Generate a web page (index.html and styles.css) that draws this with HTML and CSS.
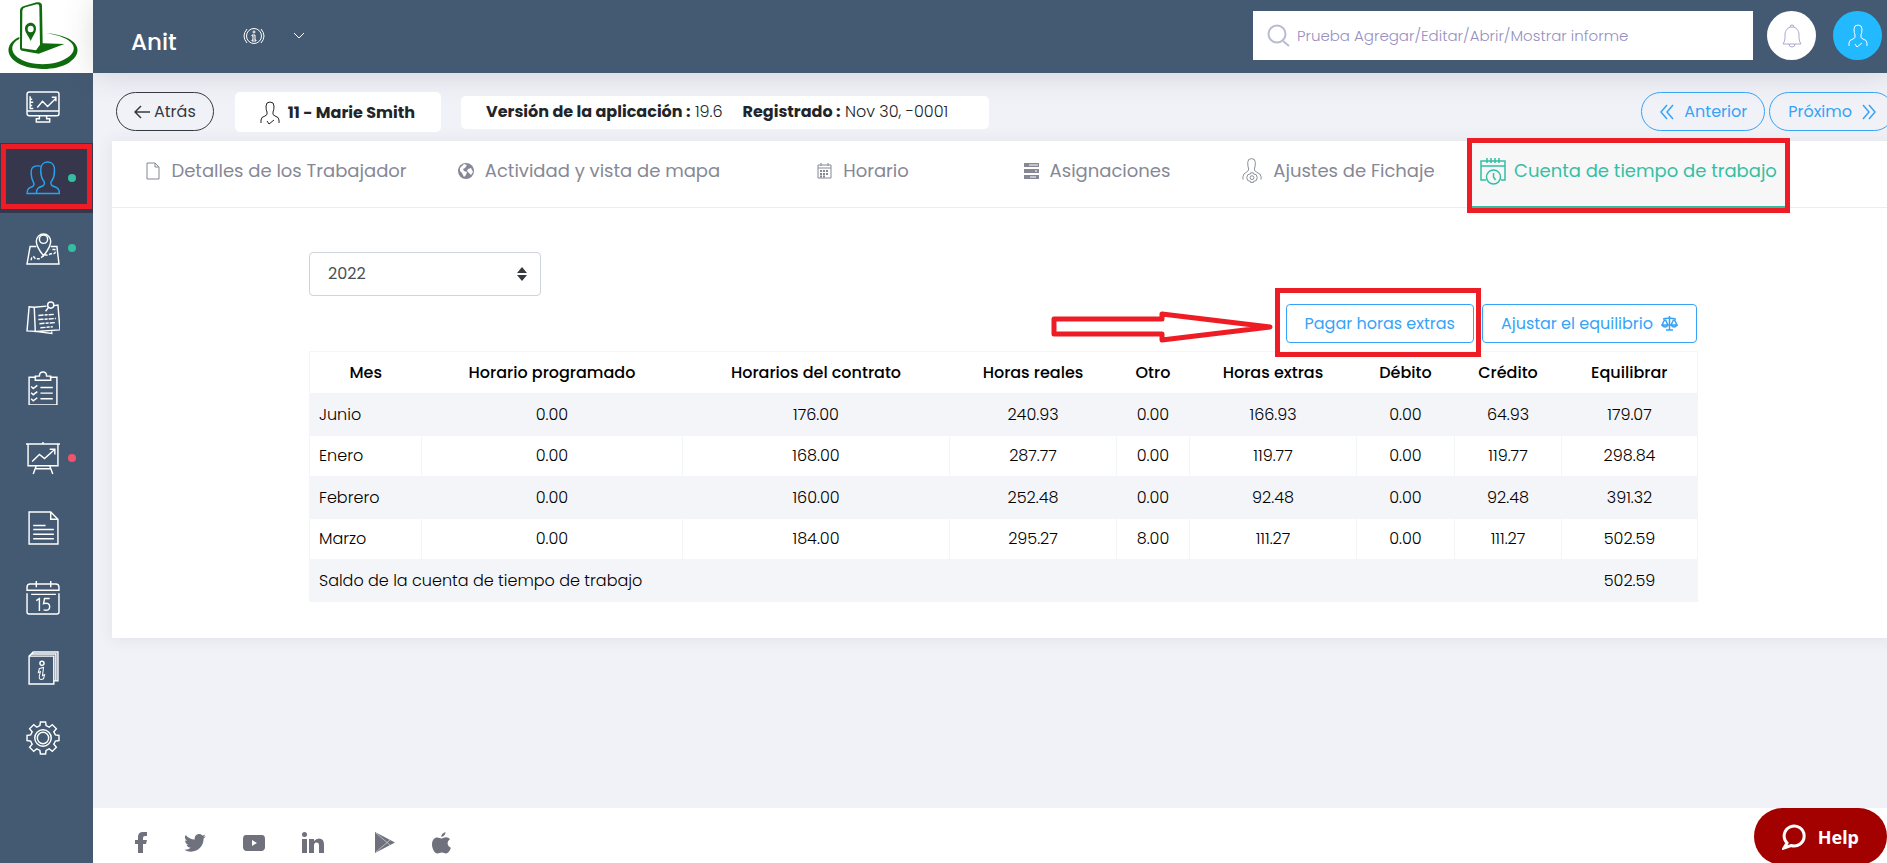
FILE: index.html
```html
<!DOCTYPE html>
<html lang="es">
<head>
    <meta charset="utf-8">
    <title>Anit</title>
    <link rel="stylesheet" href="styles.css">
</head>
<body>
<div class="app">
    <aside class="sidebar">
        <a class="logo" href="#" aria-label="Anit">
            <svg viewBox="0 0 279 219">
                <path fill="#0e6b0e" fill-rule="evenodd" d="M60 32Q60 22 72 18L110 7Q126 5 126 18L128 130L193 132L116 161Q90 157 66 152Q59 151 60 142ZM67 32Q67 25 76 22L110 13Q118 11 118 20L120 134L108 151L66 145Z"/>
                <path fill="#0e6b0e" fill-rule="evenodd" d="M92 68C101 68 108 75 108 86C108 98 98 108 92 123C86 108 75 98 75 86C75 75 83 68 92 68ZM92 77A9 10 0 1 0 92 97A9 10 0 1 0 92 77Z"/>
                <path fill="#0e6b0e" d="M58 111C20 128 15 160 45 184C80 212 165 215 207 188C255 156 238 108 138 99C222 112 240 146 204 172C166 200 88 199 52 172C28 152 34 128 58 117Z"/>
            </svg>
        </a>
        <nav class="menu">
            <a class="menu-item" href="#" aria-label="Panel">
                <svg viewBox="0 0 33 33"><rect x="1" y="1" width="31" height="23" rx="2"/><path d="M1 19.500h31M13 24v3h-3v3h13v-3h-3v-3M4 5v12h3M4 8h2M4 11h3M4 14h2M11 16l5-6 5 5 8-8M25 6h4v4"/></svg>
            </a>
            <a class="menu-item active" href="#" aria-label="Trabajadores">
                <svg viewBox="0 0 33 33"><path d="M10 31.500h22.500c0-5-3-6-6-7-3-1-3-4-1-6 2-3 2.500-6 2-12C27 3 24 1 21 1s-6 2-6.500 5.500c-.5 6 0 9 2 12 2 2 2 5-1 6-3 1-5.500 2-5.500 7zM14 5c-6-1-9 1-9 5 0 5 0 7 2 10 1 2 1 4-1 5-3 1-5 2-5 6.500h9"/></svg>
                <i class="dot green"></i>
                <span class="mark mark-menu"></span>
            </a>
            <a class="menu-item" href="#" aria-label="Mapa">
                <svg viewBox="0 0 33 33"><path d="M10 15H4L1 32h31l-2-17h-6M17 24c-5-6-7-10-7-14a7 7 0 0 1 14 0c0 4-2 8-7 14z"/><circle cx="17" cy="8" r="4"/><path stroke-dasharray="3 1.500" d="M17 24l-4 3H9c-2-4-4-2-4 2M18 23c4 1 4 0 6-1 5 1 5-2 4-4h-4"/></svg>
                <i class="dot green"></i>
            </a>
            <a class="menu-item" href="#" aria-label="Notas">
                <svg viewBox="0 0 33 33"><path d="M8 6l-5-.5L1 29l8 .5 16 2v-2M8 6l1 23.500L33 28 31 4l-4 .5M8 6l12-1"/><circle cx="24" cy="4" r="3"/><path d="M22 6l-3 4"/><path stroke-dasharray="5 1 3 1" d="M12 14l15-1M12 18l17-1M13 22l15-1M14 26l12-1"/></svg>
            </a>
            <a class="menu-item" href="#" aria-label="Tareas">
                <svg viewBox="0 0 33 33"><path d="M10 6H3v27h27V6h-7M9 9V5h4c0-2 1-4 3.500-4S20 3 20 5h4v4zM14 16h12M14 21.500h12M14 27h12M5 15l2 2 4-3M5 21l2 2 4-3M5 27l2 2 4-3"/></svg>
            </a>
            <a class="menu-item" href="#" aria-label="Informes">
                <svg viewBox="0 0 33 33"><path d="M0 3h33M2 3v21h29V3M16.500 1v2M10 24L7 32M23 24l3 8M9 27h15M6 20l7-7 5 4 10-9M23 8h5v5"/></svg>
                <i class="dot red"></i>
            </a>
            <a class="menu-item" href="#" aria-label="Documentos">
                <svg viewBox="0 0 33 33"><path d="M3 1h21l7 7v24H3zM24 1v7h7M7 14h12M7 18h20M7 22.500h20M7 27h20"/></svg>
            </a>
            <a class="menu-item" href="#" aria-label="Calendario">
                <svg viewBox="0 0 33 33"><path d="M1 9V6q0-3 3-3h25q3 0 3 3v3zM1 12v18q0 2 2 2h27q2 0 2-2V12M10 0v6M24 0v6M5 13h24"/><path d="M10 19l3-2v12M23 17h-5l-1 5c4-1 6 0 6 3s-2 4-6 3"/></svg>
            </a>
            <a class="menu-item" href="#" aria-label="Ayuda">
                <svg viewBox="0 0 33 33"><path d="M3 5h24v27H3zM3 5l4-4h24v28h-4M5 3h24v26"/><circle cx="15.500" cy="12" r="2"/><path stroke-width="1" d="M13 17l4-1-1 8 2-1-1 4q-5 2-4-3l1-4-2 1z"/></svg>
            </a>
            <a class="menu-item" href="#" aria-label="Ajustes">
                <svg viewBox="0 0 33 33"><path d="M13.500 4.500l.5-3.500h5l.5 3.500 3 1.500 3-2.500 4 4-2.500 3 1.500 3 3.500.5v5l-3.500.5-1.500 3 2.500 3-4 4-3-2.500-3 1.500-.5 3.500h-5l-.5-3.500-3-1.500-3 2.500-4-4 2.500-3-1.500-3L1 19v-5l3.500-.5 1.500-3L3.500 7.500l4-4 3 2.500z"/><circle cx="16.500" cy="16.500" r="8"/><circle cx="16.500" cy="16.500" r="5.500"/></svg>
            </a>
        </nav>
    </aside>

    <div class="page">
        <header class="header">
            <h1 class="brand">Anit</h1>
            <button class="info-menu" type="button" aria-label="Información">
                <svg width="22" height="18" viewBox="0 0 22 18"><circle cx="11" cy="9" r="7.500"/><circle cx="11" cy="5" r="1"/><path d="M9 8h3v5h1v1H9v-1h1V9H9zM4 2q-6 7 0 14M18 2q6 7 0 14"/></svg>
                <svg width="12" height="8" viewBox="0 0 12 8"><path d="M1 1l5 5 5-5"/></svg>
            </button>
            <div class="header-right">
                <div class="search">
                    <svg width="24" height="24" viewBox="0 0 24 24"><circle cx="10" cy="10" r="8.500"/><path d="M16 17l6 5"/></svg>
                    <input type="text" aria-label="Buscar" placeholder="Prueba Agregar/Editar/Abrir/Mostrar informe">
                </div>
                <button class="round" type="button" aria-label="Notificaciones">
                    <svg width="24" height="24" viewBox="0 0 24 24"><path d="M3 20c2-3 2-5 2-9 0-5 3-8 7-8s7 3 7 8c0 4 0 6 2 9zM10 3q0-2 2-2t2 2M9 20q0 3 3 3t3-3"/></svg>
                </button>
                <button class="round user" type="button" aria-label="Usuario">
                    <svg width="20" height="24" viewBox="0 0 20 24"><path d="M1 22v-3q0-3 4-4 3-1 2-4-1-2-1-6 0-4 4-4t4 4q0 4-1 6-1 3 2 4 4 1 4 4v3M7 20l2 3 5-4"/></svg>
                </button>
            </div>
        </header>

        <main class="content">
            <div class="toolbar">
                <button class="pill back" type="button">
                    <svg width="17" height="14" viewBox="0 0 17 14"><path d="M7 1L1 7l6 6M1 7h15"/></svg>Atrás
                </button>
                <div class="worker">
                    <svg width="20" height="24" viewBox="0 0 20 24"><path d="M1 22v-3q0-3 4-4 3-1 2-4-1-2-1-6 0-4 4-4t4 4q0 4-1 6-1 3 2 4 4 1 4 4v3M7 20l2 3 5-4"/></svg>
                    <b>11 - Marie Smith</b>
                </div>
                <div class="version">
                    <span><b>Versión de la aplicación :</b> 19.6</span>
                    <span><b>Registrado :</b> Nov 30, -0001</span>
                </div>
                <div class="pager">
                    <button class="pill" type="button">
                        <svg width="14" height="16" viewBox="0 0 14 16"><path d="M7 1L1 8l6 7M13 1L7 8l6 7"/></svg>Anterior
                    </button>
                    <button class="pill" type="button">
                        Próximo<svg width="14" height="16" viewBox="0 0 14 16"><path d="M1 1l6 7-6 7M7 1l6 7-6 7"/></svg>
                    </button>
                </div>
            </div>

            <section class="panel">
                <nav class="tabs">
                    <a class="tab" href="#">
                        <svg width="14" height="18" viewBox="0 0 14 18"><path d="M1 1h8l4 4v12H1zM9 1v4h4"/></svg>Detalles de los Trabajador
                    </a>
                    <a class="tab" href="#">
                        <svg width="16" height="16" viewBox="0 0 16 16"><circle class="solid" cx="8" cy="8" r="8"/><path class="cut" d="M2 5l4-4 3 1-2 3-2 1 1 2 3 1-1 3-2 2-2-4-2-2zM10 6l3-1 2 4-2 3-2-2-2-2z"/></svg>Actividad y vista de mapa
                    </a>
                    <a class="tab" href="#">
                        <svg width="15" height="16" viewBox="0 0 15 16"><path d="M1 2h13v13H1zM1 5h13M4 0v3M11 0v3"/><path stroke-width="2" stroke-dasharray="2 1" d="M3 8h9M3 11h9M3 13.500h6"/></svg>Horario
                    </a>
                    <a class="tab" href="#">
                        <svg width="15" height="16" viewBox="0 0 15 16"><path class="solid" d="M0 0h15v4H0zM0 6h15v4H0zM0 12h15v4H0z"/><path class="cutline" d="M5 2h9M11 8h2M6 14h6"/></svg>Asignaciones
                    </a>
                    <a class="tab" href="#">
                        <svg width="20" height="27" viewBox="0 0 21 27"><path d="M1 23v-3q0-3 4-5 2-1 2-3-1-3-1-7 0-4 4-4t4 4q0 4-1 7 0 2 2 3 5 2 5 5v3"/><circle cx="10.500" cy="21" r="2"/><path d="M9 16h3v1l3 1 1 3-1 3-3 1v1H9v-1l-3-1-1-3 1-3 3-1z"/></svg>Ajustes de Fichaje
                    </a>
                    <a class="tab active" href="#">
                        <svg width="26" height="27" viewBox="0 0 26 27"><path d="M6 22H1V3h24v19h-4M1 8h24M7 0v5M11 0v5M15 0v5M19 0v5"/><circle cx="13.500" cy="19" r="7"/><path d="M13.500 15v4l2 3"/></svg>Cuenta de tiempo de trabajo
                        <span class="mark mark-tab"></span>
                    </a>
                </nav>

                <div class="account">
                    <select class="year" aria-label="Año">
                        <option>2022</option>
                    </select>

                    <div class="actions">
                        <div class="pay">
                            <button class="btn" type="button">Pagar horas extras</button>
                            <span class="mark mark-pay"></span>
                            <svg class="arrow" width="223" height="32" viewBox="0 0 223 32"><path d="M3 8h108V3l108 13-108 13v-6H3z"/></svg>
                        </div>
                        <button class="btn" type="button">
                            Ajustar el equilibrio
                            <svg width="17" height="15" viewBox="0 0 17 15"><path d="M8.500 0v14M5 14h7M2 3l6-1 7 1M4 3L1 9h6zM13 3l-3 6h6zM1 9q3 4 6 0M10 9q3 4 6 0"/></svg>
                        </button>
                    </div>

                    <table class="hours">
                        <colgroup>
                            <col class="c-month"><col class="c-planned"><col class="c-contract"><col class="c-real"><col class="c-other"><col class="c-extra"><col class="c-debit"><col class="c-credit"><col class="c-balance">
                        </colgroup>
                        <thead>
                            <tr><th>Mes</th><th>Horario programado</th><th>Horarios del contrato</th><th>Horas reales</th><th>Otro</th><th>Horas extras</th><th>Débito</th><th>Crédito</th><th>Equilibrar</th></tr>
                        </thead>
                        <tbody>
                            <tr><td>Junio</td><td>0.00</td><td>176.00</td><td>240.93</td><td>0.00</td><td>166.93</td><td>0.00</td><td>64.93</td><td>179.07</td></tr>
                            <tr><td>Enero</td><td>0.00</td><td>168.00</td><td>287.77</td><td>0.00</td><td>119.77</td><td>0.00</td><td>119.77</td><td>298.84</td></tr>
                            <tr><td>Febrero</td><td>0.00</td><td>160.00</td><td>252.48</td><td>0.00</td><td>92.48</td><td>0.00</td><td>92.48</td><td>391.32</td></tr>
                            <tr><td>Marzo</td><td>0.00</td><td>184.00</td><td>295.27</td><td>8.00</td><td>111.27</td><td>0.00</td><td>111.27</td><td>502.59</td></tr>
                            <tr><td colspan="8">Saldo de la cuenta de tiempo de trabajo</td><td>502.59</td></tr>
                        </tbody>
                    </table>
                </div>
            </section>
        </main>

        <footer class="footer">
            <a href="#" aria-label="Facebook"><svg width="12" height="21" viewBox="0 0 12 21"><path d="M12 0v4h-2q-2 0-2 2v2h4l-1 4H8v9H3v-9H0V8h3V5q0-5 5-5z"/></svg></a>
            <a href="#" aria-label="Twitter"><svg width="22" height="18" viewBox="0 0 24 20"><path d="M24 2.400a10 10 0 0 1-2.800.8A5 5 0 0 0 23.300.500a10 10 0 0 1-3.100 1.200 4.900 4.900 0 0 0-8.400 4.500A14 14 0 0 1 1.700 1a4.900 4.900 0 0 0 1.500 6.600A5 5 0 0 1 1 7v.1a4.900 4.900 0 0 0 3.900 4.800 5 5 0 0 1-2.200.1 4.900 4.900 0 0 0 4.600 3.400A10 10 0 0 1 0 17.500a14 14 0 0 0 7.500 2.200c9.100 0 14.300-7.700 14-14.600A10 10 0 0 0 24 2.400z"/></svg></a>
            <a href="#" aria-label="YouTube"><svg width="22" height="16" viewBox="0 0 22 16"><path fill-rule="evenodd" d="M3 0q8-1 16 0 3 0 3 4v8q0 3-3 4-8 .5-16 0-3-1-3-4V4q0-4 3-4zM9 5v6l5-3z"/></svg></a>
            <a href="#" aria-label="LinkedIn"><svg width="22" height="21" viewBox="0 0 22 21"><circle cx="2.500" cy="2.500" r="2.500"/><path d="M0 7h5v14H0zM7 7h5v2q2-2.500 5-2.500 5 0 5 6V21h-5v-7.500q0-3-2.500-3T12 13.500V21H7z"/></svg></a>
            <a class="store" href="#" aria-label="Google Play"><svg width="20" height="21" viewBox="0 0 20 21"><path d="M0 0l20 10.500L0 21z"/><path class="crease" d="M1 1l14 12M1 20L15 8"/></svg></a>
            <a href="#" aria-label="App Store"><svg width="19" height="22" viewBox="0 0 19 22"><path d="M13.500 0q0 4-4.200 5Q9 1.500 13.500 0zM9.500 6.500c1.500 0 2.500-1.200 4.500-1.200 1.800 0 3 .8 4 2-3.500 2-3 7 .9 8.500C18 19 16 21.500 14 21.500c-1.600 0-2.200-1-4.200-1s-2.600 1-4.200 1C2.500 21.500 0 16.500 0 12.500c0-4.500 2.500-7 5.200-7 1.800 0 3 1 4.300 1z"/></svg></a>
        </footer>
    </div>
</div>

<button class="help" type="button">
    <svg width="24" height="26" viewBox="0 0 24 26"><path d="M2 24l3-5A10 10 0 1 1 9 21.500z"/></svg>Help
</button>
</body>
</html>
```
FILE: styles.css
```css
* { box-sizing: border-box; }
body {
    margin: 0;
    font-family: Poppins, Inter, "Open Sans", sans-serif;
    font-size: 16px;
    line-height: 24px;
    color: #212529;
    background: #f1f2f8;
    overflow-x: hidden;
}
a { color: inherit; text-decoration: none; }
button, input, select { font: inherit; color: inherit; }
button { cursor: pointer; }
svg {
    flex: none;
    fill: none;
    stroke: currentColor;
}
h1 { margin: 0; }
b { font-weight: 700; }

.app {
    display: flex;
    min-height: 100vh;
}

/* sidebar */
.sidebar {
    flex: none;
    width: 93px;
    background: #445a72;
}
.logo {
    display: block;
    height: 73px;
    background: #fff;
}
.logo svg { display: block; stroke: none; }
.menu-item {
    position: relative;
    display: flex;
    align-items: center;
    height: 70px;
    padding-left: 26px;
    color: #fff;
}
.menu-item svg {
    width: 34px;
    height: 34px;
    stroke-width: 1.4;
}
.menu-item.active {
    background: #36374c;
    color: #22a7f0;
}
.dot {
    width: 8px;
    height: 8px;
    margin-left: 8px;
    border-radius: 50%;
}
.dot.green { background: #34bfa3; }
.dot.red { background: #f4516c; }

/* header */
.page {
    display: flex;
    flex-direction: column;
    flex: 1;
    min-width: 0;
}
.header {
    display: flex;
    align-items: center;
    height: 73px;
    padding: 0 5px 2px 38px;
    background: #445a72;
    color: #fff;
    box-shadow: 0 1px 30px rgba(69, 65, 78, 0.18);
}
.brand {
    padding-top: 12px;
    font-size: 23px;
    font-weight: 500;
}
.info-menu {
    display: flex;
    align-items: center;
    gap: 28px;
    margin-left: 66px;
    padding: 0;
    border: 0;
    background: none;
}
.header-right {
    display: flex;
    align-items: center;
    gap: 17px;
    margin-left: auto;
}
.search {
    display: flex;
    align-items: center;
    gap: 6px;
    width: 500px;
    height: 49px;
    margin-right: -3px;
    padding: 0 14px;
    background: #fff;
    color: #b9bcd0;
}
.search svg { stroke-width: 2; }
.search input {
    flex: 1;
    border: 0;
    padding: 0;
    outline: 0;
    font-size: 15px;
    font-weight: 300;
    color: #575962;
    background: none;
}
.search input::placeholder { color: #9690bf; }
.round {
    display: flex;
    align-items: center;
    justify-content: center;
    width: 49px;
    height: 49px;
    padding: 0;
    border: 0;
    border-radius: 50%;
    background: #fff;
    color: #aca8cb;
}
.round.user {
    background: #22b9ff;
    color: #fff;
}

/* worker toolbar */
.content {
    flex: 1;
    margin-right: -7px;
    padding: 19px 0 0 19px;
}
.toolbar {
    display: flex;
    align-items: flex-start;
    height: 40px;
    margin: 0 0 9px 4px;
}
.pill {
    display: flex;
    align-items: center;
    gap: 10px;
    height: 39px;
    padding: 0 17px 0 18px;
    border: 1px solid #36a3f7;
    border-radius: 20px;
    background: none;
    color: #36a3f7;
}
.pill svg { stroke-width: 1.5; }
.pill.back {
    gap: 3px;
    padding: 0 17px;
    border-color: #343a40;
    color: #343a40;
}
.worker {
    display: flex;
    align-items: center;
    gap: 8px;
    height: 40px;
    margin-left: 21px;
    padding: 2px 26px 0 25px;
    border-radius: 5px;
    background: #fff;
}
.version {
    display: flex;
    gap: 20px;
    margin: 4px 0 0 20px;
    padding: 4px 41px 5px 25px;
    border-radius: 5px;
    background: #fff;
    font-weight: 300;
}
.pager {
    display: flex;
    gap: 4px;
    margin-left: auto;
}

/* panel and tabs */
.panel {
    background: #fff;
    box-shadow: 0 1px 15px 1px rgba(69, 65, 78, 0.08);
}
.tabs {
    display: grid;
    grid-template-columns: 329fr 296fr 252fr 216fr 267fr 313fr 109fr;
    height: 67px;
    padding-top: 3px;
    border-bottom: 1px solid #ebedf2;
}
.tab {
    position: relative;
    display: flex;
    align-items: center;
    justify-content: center;
    gap: 11px;
    padding-bottom: 10px;
    font-size: 18px;
    white-space: nowrap;
    color: #868895;
}
.tab .solid { fill: currentColor; stroke: none; }
.tab .cut { fill: #fff; stroke: none; }
.tab .cutline { stroke: #fff; }
.tab.active {
    gap: 8px;
    margin-bottom: -1px;
    border-bottom: 2px solid #34bfa3;
    padding-bottom: 8px;
    background: #f7f7f8;
    color: #34bfa3;
}
.tab.active svg { stroke-width: 1.5; }

/* time account */
.account { padding: 44px 197px 36px; }
.year {
    display: block;
    width: 232px;
    height: 44px;
    padding: 0 18px;
    border: 1px solid #ced4da;
    border-radius: 4px;
    appearance: none;
    color: #495057;
    background: #fff url("data:image/svg+xml,%3Csvg xmlns='http://www.w3.org/2000/svg' viewBox='0 0 10 14'%3E%3Cpath fill='%23343a40' d='M0 6l5-6 5 6zM0 8h10l-5 6z'/%3E%3C/svg%3E") no-repeat right 13px center / 10px 14px;
}
.actions {
    display: flex;
    justify-content: flex-end;
    gap: 8px;
    margin: 8px 0;
}
.btn {
    display: flex;
    align-items: center;
    gap: 8px;
    height: 39px;
    padding: 0 18px;
    border: 1px solid #36a3f7;
    border-radius: 4px;
    background: #fff;
    color: #36a3f7;
}
.btn svg { stroke-width: 1.5; }
.pay { position: relative; }

.hours {
    width: 100%;
    table-layout: fixed;
    border-collapse: collapse;
    border: 1px solid #f4f5f8;
    color: #000;
}
.hours th, .hours td {
    padding: 9px 8px 8px;
    text-align: center;
}
.hours th { font-weight: 500; }
.hours td {
    border: 1px solid #f4f5f8;
    font-weight: 300;
}
.hours td:first-child { padding-left: 9px; text-align: left; }
.hours tbody tr:nth-child(odd) { background: #f4f5f8; }
.hours tbody tr:nth-child(even) td { padding-top: 8px; }
.c-month { width: 112px; }
.c-planned { width: 261px; }
.c-contract { width: 267px; }
.c-real, .c-extra { width: 167px; }
.c-other { width: 73px; }
.c-debit { width: 98px; }
.c-credit { width: 107px; }
.c-balance { width: 136px; }

/* red highlights */
.mark {
    position: absolute;
    z-index: 1;
    border: 5px solid #ee1c24;
    pointer-events: none;
}
.mark-menu { inset: 1px 1px 4px 1px; }
.mark-tab { inset: -6px -5px -7px; }
.mark-pay { inset: -16px -7px -14px -11px; }
.arrow {
    position: absolute;
    top: 7px;
    right: 200px;
    stroke: #ee1c24;
    stroke-width: 5;
    stroke-linejoin: round;
}

/* footer */
.footer {
    display: flex;
    align-items: center;
    gap: 37px;
    height: 55px;
    padding: 14px 42px 0;
    background: #fff;
    color: #6f727d;
}
.footer a { display: flex; }
.footer svg { fill: currentColor; stroke: none; }
.footer .store { margin-left: 14px; }
.footer .crease { fill: none; stroke: #fff; stroke-width: 0.5; }
.help {
    position: fixed;
    right: 0;
    bottom: -2px;
    display: flex;
    align-items: center;
    gap: 12px;
    height: 57px;
    padding: 0 28px;
    border: 0;
    border-radius: 29px;
    background: #a30000;
    color: #fff;
    font-family: "Noto Sans", sans-serif;
    font-size: 18px;
    font-weight: 700;
}
.help svg { stroke-width: 3; }
```
